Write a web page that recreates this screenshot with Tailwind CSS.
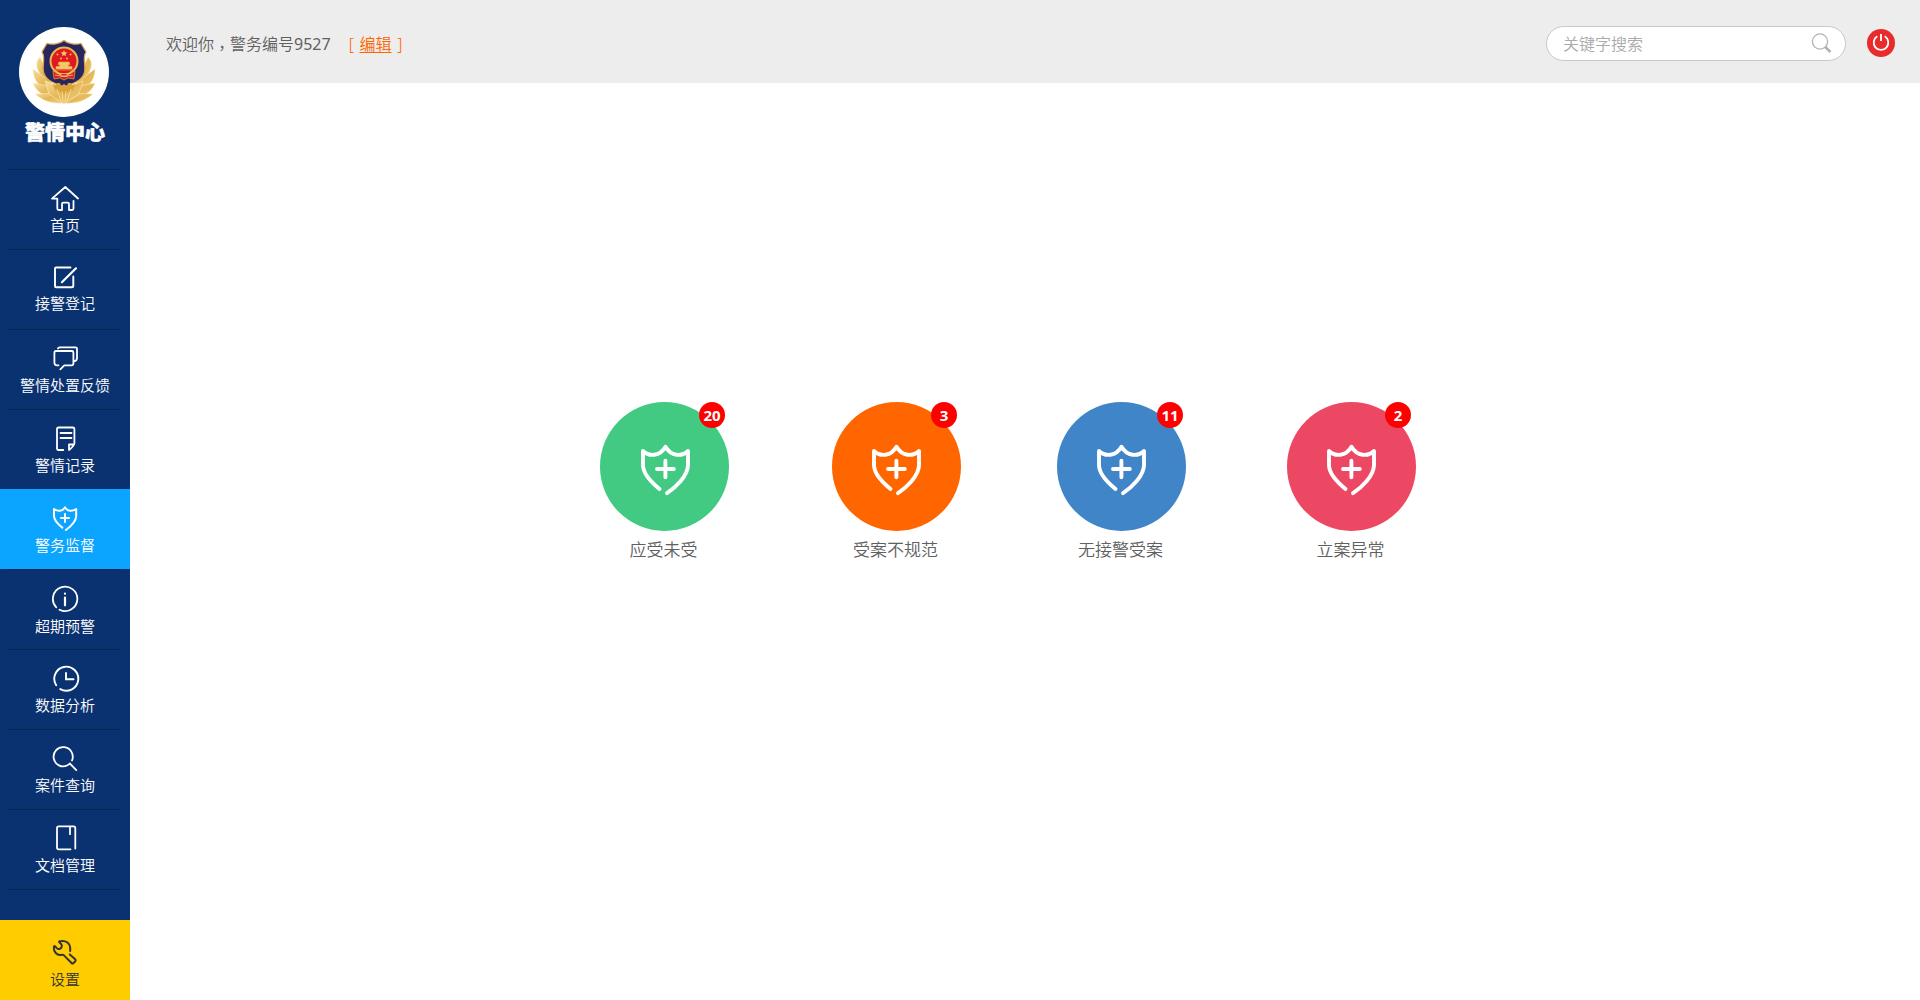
<!DOCTYPE html>
<html lang="zh-CN">
<head>
<meta charset="utf-8">
<title>警情中心</title>
<script src="https://cdn.jsdelivr.net/npm/@tailwindcss/browser@4"></script>
</head>
<body class="flex h-[1000px] w-[1920px] overflow-hidden bg-white font-['Noto_Sans','Noto_Sans_CJK_SC',sans-serif] font-[350] text-[#606060]">
<svg class="hidden">
  <symbol id="shield" viewBox="0 0 60 60">
    <path d="M23.500 49C18 44.500 7 35 7 25V11C13 16.800 24 16.500 29.500 6.800C35 16.500 46 16.800 52 11V25C52 36 39 48 31 53.200M29.400 20.700V37.300M21 29H37.800" fill="none" stroke="currentColor" stroke-width="3.9" stroke-linecap="round" stroke-linejoin="round"/>
  </symbol>
</svg>

<aside class="flex w-[130px] shrink-0 flex-col bg-[#0a3170] text-[15px] leading-5 text-white">
  <div class="flex h-[169px] flex-col items-center pt-[27px] pr-0.5">
    <svg class="size-[90px]" viewBox="0 0 90 90">
      <defs>
        <linearGradient id="gold" x1="0" y1="0" x2="1" y2="1"><stop offset="0" stop-color="#f6dc9c"/><stop offset=".5" stop-color="#e5b655"/><stop offset="1" stop-color="#f2d28a"/></linearGradient>
      </defs>
      <circle cx="45" cy="45" r="45" fill="#fff"/>
      <g fill="url(#gold)" stroke="#fff0c4" stroke-width=".5">
        <path d="M21 30C15 36 18 42 22 49L32 60 27 42Z"/><path d="M69 30C75 36 72 42 68 49L58 60 63 42Z"/>
        <path d="M14 42C14 56 24 64 39 68L32 55Z"/><path d="M76 42C76 56 66 64 51 68L58 55Z"/>
        <path d="M14 56C18 68 31 72 43 72L35 60Z"/><path d="M76 56C72 68 59 72 47 72L55 60Z"/>
        <path d="M16 67C25 75 36 77 44 76L45 66Z"/><path d="M74 67C65 75 54 77 46 76L45 66Z"/>
        <path d="M26 54L45 61 64 54 60 67 45 77 30 67Z"/>
      </g>
      <path d="M45 13.500C49 17 57 18 62 16.500L67 25C63 31 67 36 65.500 45C63.500 54 54 56 45 60C36 56 26.500 54 24.500 45C23 36 27 31 23 25L28 16.500C33 18 41 17 45 13.500Z" fill="#272660" stroke="#d5a343" stroke-width="1.2"/>
      <path d="M34 44L35 52 41 51 45 53 49 51 55 52 56 44Z" fill="#d81f27" stroke="#e4a83c" stroke-width=".7"/>
      <circle cx="45" cy="34" r="13.500" fill="#df1921" stroke="#e9b94f" stroke-width="2"/>
      <path d="M45 23l.9 2.300 2.500.1-2 1.500.7 2.400-2.100-1.400-2.100 1.400.7-2.400-2-1.500 2.500-.1Z" fill="#ffd35a"/>
      <g fill="#ffd35a"><circle cx="38.500" cy="27.500" r=".9"/><circle cx="51.500" cy="27.500" r=".9"/><circle cx="42" cy="31.500" r=".9"/><circle cx="48" cy="31.500" r=".9"/></g>
      <path d="M40 35H50L51 37.500H49.500V39.500H53V42H37V39.500H40.500V37.500H39ZM35 43H55" fill="#f5c765" stroke="#eeb44b" stroke-width=".6"/>
      <path d="M36 48Q45 51 54 48M42 46.500H48V49.500H42Z" fill="#d81f27" stroke="#f3c664" stroke-width=".8"/>
      <path d="M34 57l3 1 1-2 3 0 1 3 3-2 3 2 1-3 3 0 1 2 3-1-2 6-9 4-9-4Z" fill="#d9a33a"/>
      <path d="M43 64L44 76M47 64L46 76M38 62L42 74M52 62L48 74" stroke="#f9e2a2" stroke-width=".8"/>
    </svg>
    <h1 class="mt-1 ml-0.5 text-xl leading-6 font-black whitespace-nowrap [-webkit-text-stroke:0.5px_white]">警情中心</h1>
  </div>

  <nav class="flex flex-col">
    <a class="flex h-20 flex-col items-center">
      <span class="mr-0.5 h-px w-28 bg-[#0b2351]"></span>
      <svg class="mt-[13px] size-[30px]" viewBox="0 0 30 30" fill="none" stroke="currentColor" stroke-width="1.8" stroke-linecap="round" stroke-linejoin="round"><path d="M28 15.500L15.300 4L2 15.600H7.300V25.500Q7.300 27 8.800 27H12V21Q12 19.700 13.300 19.700H17.700Q19 19.700 19 21V27H22Q23.500 27 23.500 25.500V18"/></svg>
      <span class="mt-0.5">首页</span>
    </a>
    <a class="flex h-20 flex-col items-center">
      <span class="mr-0.5 h-px w-28 bg-[#0b2351]"></span>
      <svg class="mt-[13px] size-[30px]" viewBox="0 0 30 30" fill="none" stroke="currentColor" stroke-width="1.9" stroke-linecap="round" stroke-linejoin="round"><path d="M20.500 4.500H6Q5 4.500 5 5.500V23Q5 24.300 6 24.300H22Q23.300 24.300 23.300 23V13.500"/><path stroke-width="2.2" d="M26 5.300L11.900 19.200"/></svg>
      <span>接警登记</span>
    </a>
    <a class="flex h-20 flex-col items-center">
      <span class="mr-0.5 h-px w-28 bg-[#0b2351]"></span>
      <svg class="mt-[13px] size-[30px]" viewBox="0 0 30 30" fill="none" stroke="currentColor" stroke-width="1.8" stroke-linecap="round" stroke-linejoin="round"><path d="M8 5.500Q8.300 4.300 9.500 4.300H25.500Q27 4.300 27 5.800V15Q27 17.500 24.800 18M8.500 22.300H7Q4.400 22.300 4.400 19.500V9.500Q4.400 8 6 8H21.800Q23.400 8 23.400 9.500V20.800Q23.400 22.300 21.800 22.300H14.300L10.300 26.300"/></svg>
      <span class="mt-0.5">警情处置反馈</span>
    </a>
    <a class="flex h-20 flex-col items-center">
      <span class="mr-0.5 h-px w-28 bg-[#0b2351]"></span>
      <svg class="mt-[13px] size-[30px]" viewBox="0 0 30 30" fill="none" stroke="currentColor" stroke-width="1.8" stroke-linecap="round" stroke-linejoin="round"><path d="M13.300 27H8.500Q7 27 7 25.500V6Q7 4.500 8.500 4.500H22.800Q24.400 4.500 24.400 6V20.500Q24.300 22.500 19 27V21.500H23.500M10.500 10H21.500M10.500 15H21.500"/></svg>
      <span class="mt-0.5">警情记录</span>
    </a>
    <a class="flex h-20 flex-col items-center bg-[#0ba5ff] pt-px">
      <svg class="mt-[13px] size-[30px]" viewBox="0 0 30 30" fill="none" stroke="currentColor" stroke-width="2" stroke-linecap="round" stroke-linejoin="round"><path d="M12.300 24.600C9 22 4 18 4 13V6C8 8.600 12.500 8.500 15 4.400C17.500 8.500 22 8.600 26.200 6V13C26 19 20 24 15.900 27M15 11V19M11 15H19"/></svg>
      <span class="mt-0.5">警务监督</span>
    </a>
    <a class="flex h-20 flex-col items-center">
      <span class="mr-0.5 h-px w-28 bg-[#0b2351]"></span>
      <svg class="mt-[13px] size-[30px]" viewBox="0 0 30 30" fill="none" stroke="currentColor" stroke-width="1.8" stroke-linecap="round"><path d="M6.300 24.300A12.200 12.200 0 1 1 9.500 26.700"/><path stroke-width="2.2" d="M15 10.600V10.700M15 14.500V22.300"/></svg>
      <span class="mt-[3px]">超期预警</span>
    </a>
    <a class="flex h-20 flex-col items-center">
      <span class="mr-0.5 h-px w-28 bg-[#0b2351]"></span>
      <svg class="mt-[13px] size-[30px]" viewBox="0 0 30 30" fill="none" stroke="currentColor" stroke-width="1.9" stroke-linecap="round"><path d="M6.200 22.200A12 12 0 1 1 10.300 26.100M16 10V16.300H23.500"/></svg>
      <span class="mt-0.5">数据分析</span>
    </a>
    <a class="flex h-20 flex-col items-center">
      <span class="mr-0.5 h-px w-28 bg-[#0b2351]"></span>
      <svg class="mt-[13px] size-[30px]" viewBox="0 0 30 30" fill="none" stroke="currentColor" stroke-width="1.8" stroke-linecap="round"><path d="M22 17.500A9.600 9.600 0 1 0 17.500 22.300Q19 21.500 19.900 20.500L26.300 27.100"/></svg>
      <span class="mt-0.5">案件查询</span>
    </a>
    <a class="flex h-20 flex-col items-center">
      <span class="mr-0.5 h-px w-28 bg-[#0b2351]"></span>
      <svg class="mt-[13px] size-[30px]" viewBox="0 0 30 30" fill="none" stroke="currentColor" stroke-width="1.8" stroke-linecap="round" stroke-linejoin="round"><path d="M20.500 26.300H8.700Q7 26.300 7 24.700V5Q7 3.400 8.700 3.400H23.600Q25.300 3.400 25.300 5V25.500M20 4V11.200"/></svg>
      <span class="mt-0.5">文档管理</span>
    </a>
    <span class="ml-2 h-px w-28 bg-[#0b2351]"></span>
  </nav>

  <a class="mt-auto flex h-20 flex-col items-center bg-[#fc0] pt-[17px] text-[#333]">
    <svg class="size-[30px]" viewBox="0 0 30 30" fill="none" stroke="currentColor" stroke-width="2" stroke-linecap="round" stroke-linejoin="round"><path d="M20.200 14V10.500C20 6.500 16 3.500 11.500 4C9.500 4.100 8.600 4.400 9.400 5.300L11.300 7.200Q12.300 8.300 11.600 10Q11 11.500 9.500 12Q8 12.400 7 11.400L5 9.300Q4 8.600 3.800 10.500C3.600 15 7 18.300 10.500 18Q13 17.400 14 18.400L21.500 26Q22.500 27 23.500 26L25.300 24.200Q26.200 23.200 25.200 22.200L19.800 17.400"/></svg>
    <span class="mt-0.5">设置</span>
  </a>
</aside>

<div class="flex grow flex-col">
  <header class="flex h-[83px] items-start justify-between bg-[#ededed] pr-[25px] pl-9">
    <div class="flex gap-[18px] pt-8 text-base leading-6">
      <span>欢迎你<span lang="zh-TW" class="relative top-1 font-['Noto_Sans_CJK_TC',sans-serif] leading-none">，</span>警务编号<span class="font-normal">9527</span></span>
      <span class="text-[#f60] [word-spacing:1.5px]">[ <a class="underline decoration-1 underline-offset-2">编辑</a> ]</span>
    </div>
    <div class="flex pt-[26px]">
      <div class="flex h-[35px] w-[300px] items-center justify-between rounded-full border border-[#c8c8c8] bg-white pr-[13px] pl-4 text-base text-[#aaa]">
        <span>关键字搜索</span>
        <svg class="size-[21px]" viewBox="0 0 21 21" fill="none" stroke="#b2b2b2"><circle cx="9" cy="8.500" r="7.600" stroke-width="1.300"/><path d="M14 13.800L19.500 19" stroke-width="2.600"/></svg>
      </div>
      <svg class="mt-[3px] ml-[21px] size-7" viewBox="0 0 28 28" fill="none"><circle cx="14" cy="14" r="14" fill="#e82c2c"/><path d="M10.300 7.300A7.300 7.300 0 1 0 17.700 7.300M14 5V12" stroke="#fff" stroke-width="1.800"/></svg>
    </div>
  </header>

  <main class="flex pt-[319px] pl-[470px] text-[17px] leading-6">
    <div class="flex w-[129px] flex-col items-center">
      <div class="relative flex size-[129px] items-center justify-center rounded-full bg-[#42ca82] text-white">
        <svg class="mt-[7px] ml-[3px] size-[60px]"><use href="#shield"/></svg>
        <span class="absolute top-0 right-1 flex size-[26px] items-center justify-center rounded-full bg-[red] text-[15px] font-bold">20</span>
      </div>
      <span class="mt-[7px] mr-0.5">应受未受</span>
    </div>
    <div class="ml-[103px] flex w-[129px] flex-col items-center">
      <div class="relative flex size-[129px] items-center justify-center rounded-full bg-[#f60] text-white">
        <svg class="mt-[7px] ml-px size-[60px]"><use href="#shield"/></svg>
        <span class="absolute top-0 right-1 flex size-[26px] items-center justify-center rounded-full bg-[red] text-[15px] font-bold">3</span>
      </div>
      <span class="mt-[7px] mr-0.5">受案不规范</span>
    </div>
    <div class="ml-24 flex w-[129px] flex-col items-center">
      <div class="relative flex size-[129px] items-center justify-center rounded-full bg-[#4085c8] text-white">
        <svg class="mt-[7px] ml-px size-[60px]"><use href="#shield"/></svg>
        <span class="absolute top-0 right-[3px] flex size-[26px] items-center justify-center rounded-full bg-[red] text-[15px] font-bold">11</span>
      </div>
      <span class="mt-[7px] mr-0.5">无接警受案</span>
    </div>
    <div class="ml-[101px] flex w-[129px] flex-col items-center">
      <div class="relative flex size-[129px] items-center justify-center rounded-full bg-[#ec4863] text-white">
        <svg class="mt-[7px] ml-px size-[60px]"><use href="#shield"/></svg>
        <span class="absolute top-0 right-[5px] flex size-[26px] items-center justify-center rounded-full bg-[red] text-[15px] font-bold">2</span>
      </div>
      <span class="mt-[7px] mr-0.5">立案异常</span>
    </div>
  </main>
</div>
</body>
</html>
